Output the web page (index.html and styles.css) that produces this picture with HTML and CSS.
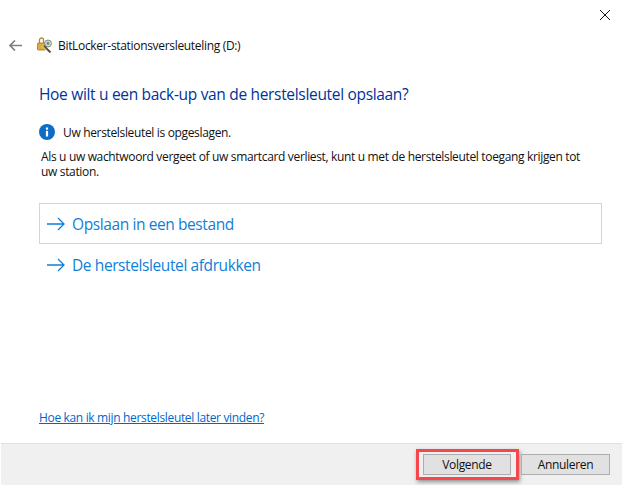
FILE: index.html
```html
<!DOCTYPE html>
<html lang="nl">
<head>
<meta charset="utf-8">
<title>BitLocker-stationsversleuteling (D:)</title>
<link rel="stylesheet" href="styles.css">
</head>
<body>
<div class="window">
  <div class="closebar">
    <svg class="close" width="10" height="10" viewBox="0 0 10 10"><path d="M0 0L10 10M10 0L0 10" stroke="#111" stroke-width="1" fill="none"/></svg>
  </div>
  <div class="titlerow">
    <svg class="back" width="13" height="11" viewBox="0 0 13 11"><path d="M6 .5L1 5.500L6 10.500M1 5.500H13" stroke="#808080" stroke-width="1.700" fill="none"/></svg>
    <svg class="appicon" width="16" height="16" viewBox="0 0 16 16">
      <rect x="0.500" y="6" width="8" height="7" rx="1" fill="#e0ad3c" stroke="#9a7420" stroke-width="0.800"/>
      <path d="M2.500 6V3a2 2 0 0 1 4 0V6" fill="none" stroke="#b08a30" stroke-width="1.300"/>
      <circle cx="11" cy="6.500" r="3.500" fill="#cfd6d2" stroke="#6d7a72" stroke-width="0.800"/>
      <circle cx="11" cy="6.500" r="1.400" fill="#5f9a5f"/>
      <path d="M7 9L13.500 15.500" stroke="#4d4a35" stroke-width="1.800"/>
      <path d="M5 9L9 13" stroke="#e2c25a" stroke-width="1.300"/>
    </svg>
    <span class="title">BitLocker-stationsversleuteling (D:)</span>
  </div>
  <main class="content">
    <h1 class="heading">Hoe wilt u een back-up van de herstelsleutel opslaan?</h1>
    <div class="notice">
      <svg class="info" width="16" height="16" viewBox="0 0 16 16"><circle cx="8" cy="8" r="8" fill="#0f6cc4"/><rect x="6.900" y="6.800" width="2.200" height="5.700" fill="#fff"/><rect x="6.900" y="3.500" width="2.200" height="2.100" fill="#fff"/></svg>
      <span>Uw herstelsleutel is opgeslagen.</span>
    </div>
    <p class="desc">Als u uw wachtwoord vergeet of uw smartcard verliest, kunt u met de herstelsleutel toegang krijgen tot uw station.</p>
    <a class="cmd cmd-focus">
      <svg width="18" height="14" viewBox="0 0 18 14"><path d="M11 1L17 7L11 13M0 7H17" stroke="#0f7fd8" stroke-width="1.300" fill="none"/></svg>
      <span>Opslaan in een bestand</span>
    </a>
    <a class="cmd">
      <svg width="18" height="14" viewBox="0 0 18 14"><path d="M11 1L17 7L11 13M0 7H17" stroke="#0f7fd8" stroke-width="1.300" fill="none"/></svg>
      <span>De herstelsleutel afdrukken</span>
    </a>
    <a class="help">Hoe kan ik mijn herstelsleutel later vinden?</a>
  </main>
  <footer class="footer">
    <div class="highlight"><button class="btn btn-next">Volgende</button></div>
    <button class="btn">Annuleren</button>
  </footer>
</div>
</body>
</html>
```
FILE: styles.css
```css
* { box-sizing: border-box; }
html, body { margin: 0; padding: 0; background: #fff; }
body { width: 622px; height: 485px; overflow: hidden; font-family: "Open Sans", "Noto Sans", sans-serif; }
.window { width: 622px; height: 485px; display: flex; flex-direction: column; }
.closebar { height: 30px; display: flex; justify-content: flex-end; align-items: flex-start; padding: 10px 12px 0 0; flex: none; }
.close { display: block; }
.titlerow { height: 30px; display: flex; align-items: center; flex: none; padding-left: 9px; }
.back { margin-right: 15px; }
.appicon { margin-right: 5px; }
.title { font-size: 12px; color: #111; letter-spacing: -0.320px; }
.content { flex: 1; display: flex; flex-direction: column; padding: 0 20px 0 39px; }
.heading { margin: 23px 0 0; font-size: 15.500px; line-height: 22px; font-weight: 400; color: #003399; letter-spacing: -0.320px; }
.notice { display: flex; align-items: center; gap: 8px; margin-top: 19px; height: 16px; font-size: 12px; color: #111; letter-spacing: -0.340px; }
.desc { margin: 9px 0 0 2px; font-size: 12px; line-height: 15px; color: #111; letter-spacing: -0.340px; width: 555px; }
.cmd { display: flex; align-items: center; gap: 7px; height: 41px; padding-left: 7px; font-size: 15.500px; color: #0f7fd8; letter-spacing: -0.400px; border: 1px solid transparent; }
.cmd-focus { margin-top: 24px; border-color: #c5d9ea; }
.help { margin-top: auto; margin-bottom: 18px; font-size: 12px; line-height: 15px; color: #0066cc; text-decoration: underline; letter-spacing: -0.340px; align-self: flex-start; }
.footer { height: 42px; margin-left: 1px; background: #f0f0f0; border-top: 1px solid #e0e0e0; display: flex; align-items: center; justify-content: flex-end; gap: 10px; padding: 0 12px 1px 0; flex: none; }
.btn { width: 89px; height: 21px; background: #e1e1e1; border: 1px solid #adadad; font-family: inherit; font-size: 12px; color: #111; letter-spacing: -0.340px; padding: 0; }
.btn-next { width: 88px; }
.highlight { display: flex; padding: 2px 5px 2px 4px; border: 3px solid #f5474c; box-shadow: 1px 2px 4px rgba(0,0,0,.4); margin-right: -8px; }
```
